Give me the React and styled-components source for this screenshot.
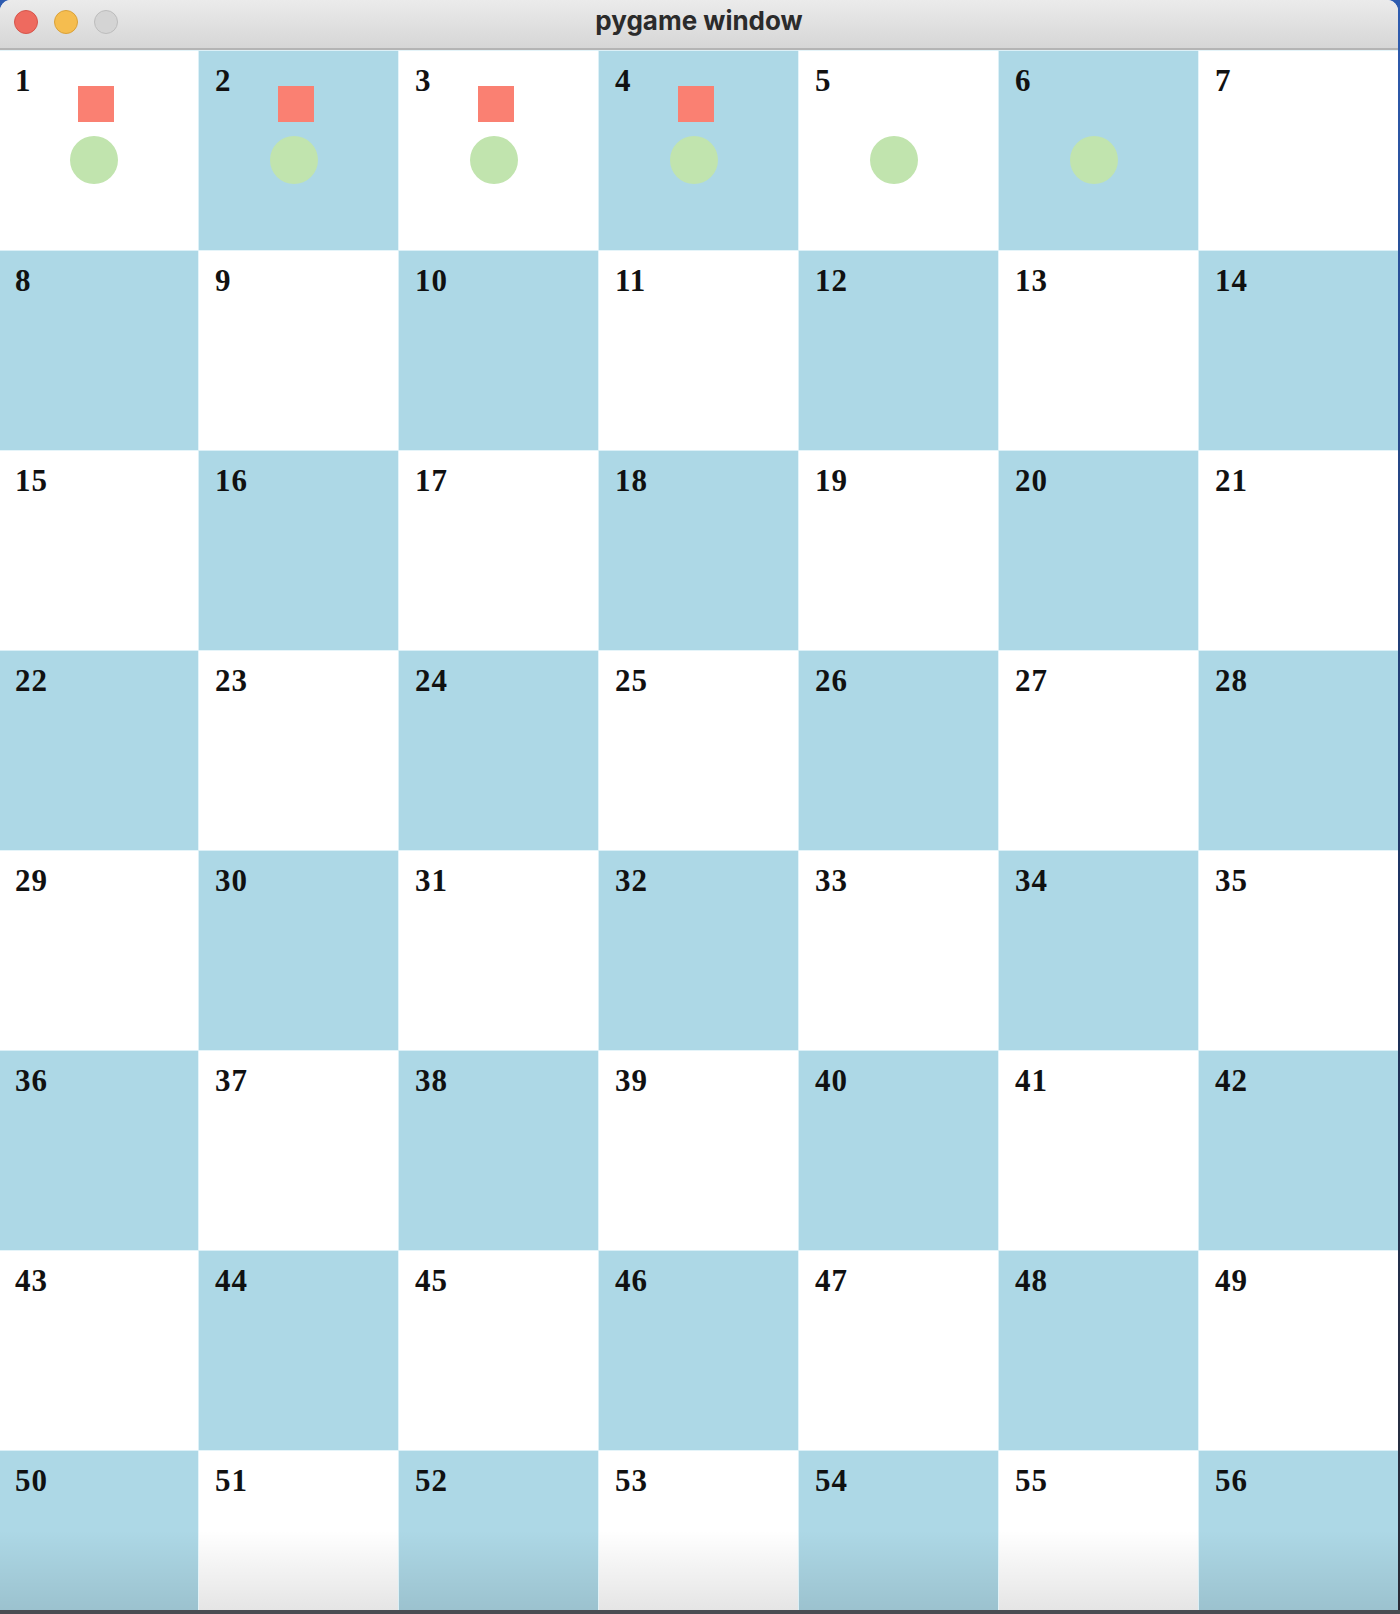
import styled, { createGlobalStyle } from 'styled-components'

const GlobalStyle = createGlobalStyle`
    html, body {
        margin: 0;
        padding: 0;
        background: #1e3566;
    }
`

const Desktop = styled.div`
    width: 1400px;
    height: 1614px;
    display: flex;
    flex-direction: column;
    background: linear-gradient(180deg, #2d5bb0 0%, #1c2f5c 60%, #2a2a35 100%);
    overflow: hidden;
`

const Window = styled.div`
    width: 1398px;
    height: 1610px;
    display: flex;
    flex-direction: column;
    border-radius: 11px 11px 0 0;
    overflow: hidden;
    background: #fff;
`

const TitleBar = styled.div`
    height: 50px;
    flex-shrink: 0;
    box-sizing: border-box;
    padding-bottom: 4px;
    display: flex;
    align-items: center;
    position: relative;
    background: linear-gradient(180deg, #ebebeb 0%, #d6d6d6 100%);
    border-bottom: 2px solid #b4b4b4;
`

const Lights = styled.div`
    display: flex;
    gap: 16px;
    padding-left: 14px;
`

const Light = styled.span`
    width: 24px;
    height: 24px;
    border-radius: 50%;
    box-sizing: border-box;
    background: ${p => p.$color};
    border: 1px solid ${p => p.$edge};
`

const Title = styled.div`
    position: absolute;
    left: 0;
    right: 0;
    top: 5px;
    text-align: center;
    font-family: Inter, "Liberation Sans", sans-serif;
    font-weight: 700;
    font-size: 26px;
    line-height: 32px;
    color: #2b2b2b;
`

const Board = styled.div`
    display: grid;
    grid-template-columns: repeat(7, 200px);
    grid-auto-rows: 200px;
    margin-left: -2px;
`

const Cell = styled.div`
    position: relative;
    box-sizing: border-box;
    background-color: ${p => (p.$blue ? '#add8e6' : '#ffffff')};
    background-image: ${p =>
        p.$fade ? 'linear-gradient(180deg, rgba(0,0,0,0) 40%, rgba(0,0,0,0.1) 80%)' : 'none'};
    box-shadow: inset 1px 1px 0 rgba(225, 243, 248, 0.9);
`

const Label = styled.div`
    padding: 15px 0 0 17px;
    font-family: "Liberation Serif", "Times New Roman", serif;
    font-weight: 700;
    font-size: 31px;
    line-height: 1;
    letter-spacing: 1px;
    color: #111;
`

const Square = styled.div`
    position: absolute;
    left: 80px;
    top: 36px;
    width: 36px;
    height: 36px;
    background: #fa8072;
`

const Token = styled.div`
    position: absolute;
    left: 72px;
    top: 86px;
    width: 48px;
    height: 48px;
    border-radius: 50%;
    background: #c1e4ae;
`

const BottomEdge = styled.div`
    height: 4px;
    background: #4a4c52;
`

const cells = Array.from({ length: 56 }, (_, i) => i + 1)

export default function App() {
    return (
        <Desktop>
            <GlobalStyle />
            <Window>
                <TitleBar>
                    <Lights>
                        <Light $color="#ee6a5f" $edge="#d5554b" />
                        <Light $color="#f5bd4f" $edge="#d9a13a" />
                        <Light $color="#d4d4d4" $edge="#bcbcbc" />
                    </Lights>
                    <Title>pygame window</Title>
                </TitleBar>
                <Board>
                    {cells.map(n => {
                        const row = Math.floor((n - 1) / 7)
                        return (
                            <Cell key={n} $blue={n % 2 === 0} $fade={row === 7}>
                                <Label>{n}</Label>
                                {n <= 4 && <Square />}
                                {n <= 6 && <Token />}
                            </Cell>
                        )
                    })}
                </Board>
            </Window>
            <BottomEdge />
        </Desktop>
    )
}
